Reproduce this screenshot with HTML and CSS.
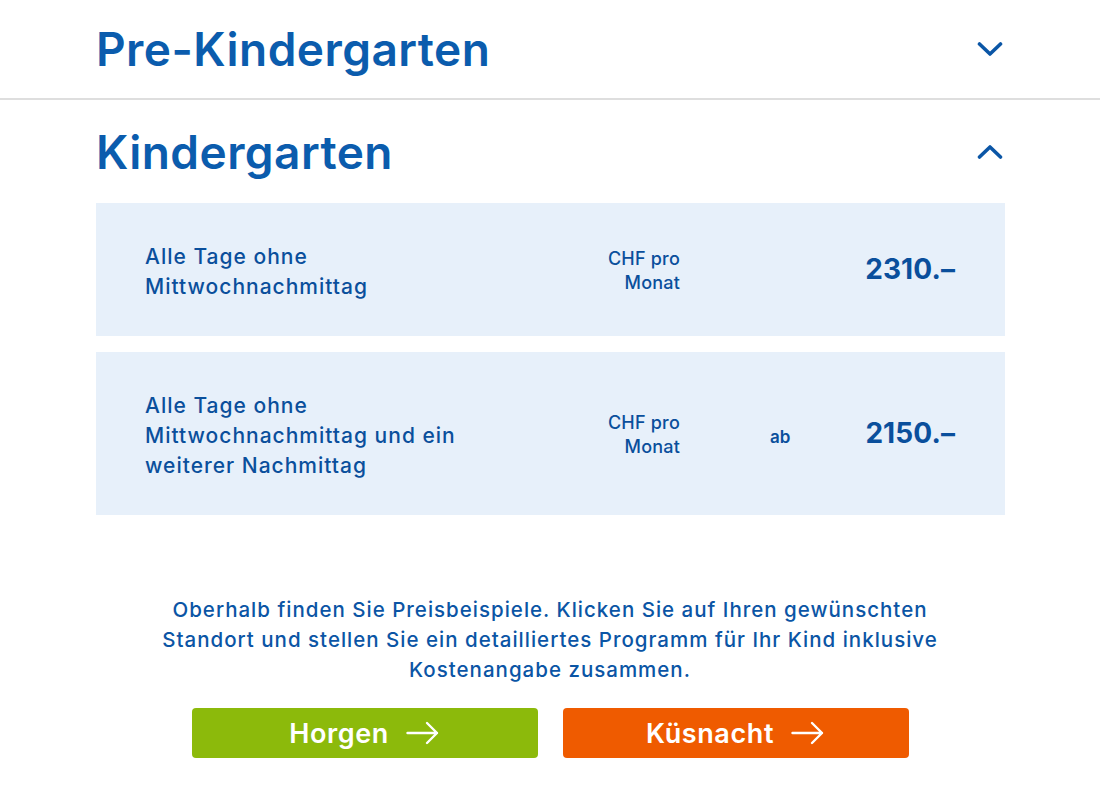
FILE: index.html
```html
<!DOCTYPE html>
<html lang="de">
<head>
<meta charset="utf-8">
<title>Preise</title>
<link rel="stylesheet" href="styles.css">
</head>
<body>
<section class="accordion">
  <div class="acc-item">
    <div class="acc-head">
      <h2 class="acc-title">Pre-Kindergarten</h2>
      <svg class="chevron" viewBox="0 0 26 16" width="26" height="16" aria-hidden="true"><path d="M2.5 3 L13 13 L23.5 3" fill="none" stroke="currentColor" stroke-width="3.6" stroke-linecap="round" stroke-linejoin="round"/></svg>
    </div>
  </div>
  <div class="acc-item open">
    <div class="acc-head">
      <h2 class="acc-title">Kindergarten</h2>
      <svg class="chevron" viewBox="0 0 26 16" width="26" height="16" aria-hidden="true"><path d="M2.5 13 L13 3 L23.5 13" fill="none" stroke="currentColor" stroke-width="3.6" stroke-linecap="round" stroke-linejoin="round"/></svg>
    </div>
    <div class="acc-body">
      <div class="price-row">
        <div class="desc">Alle Tage ohne<br>Mittwochnachmittag</div>
        <div class="unit">CHF pro<br>Monat</div>
        <div class="from"></div>
        <div class="amount">2310.–</div>
      </div>
      <div class="price-row">
        <div class="desc">Alle Tage ohne<br>Mittwochnachmittag und ein<br>weiterer Nachmittag</div>
        <div class="unit">CHF pro<br>Monat</div>
        <div class="from">ab</div>
        <div class="amount">2150.–</div>
      </div>
    </div>
  </div>
</section>
<section class="cta">
  <p class="cta-text">Oberhalb finden Sie Preisbeispiele. Klicken Sie auf Ihren gewünschten Standort und stellen Sie ein detailliertes Programm für Ihr Kind inklusive Kostenangabe zusammen.</p>
  <div class="cta-buttons">
    <a class="btn btn-green" href="#">Horgen <svg class="arrow" viewBox="0 0 34 24" width="34" height="24" aria-hidden="true"><path d="M1.5 12 H31 M21 2 L31 12 L21 22" fill="none" stroke="currentColor" stroke-width="2.4" stroke-linecap="round" stroke-linejoin="round"/></svg></a>
    <a class="btn btn-orange" href="#">Küsnacht <svg class="arrow" viewBox="0 0 34 24" width="34" height="24" aria-hidden="true"><path d="M1.5 12 H31 M21 2 L31 12 L21 22" fill="none" stroke="currentColor" stroke-width="2.4" stroke-linecap="round" stroke-linejoin="round"/></svg></a>
  </div>
</section>
</body>
</html>
```
FILE: styles.css
```css
* { box-sizing: border-box; }

html, body {
  margin: 0;
  padding: 0;
  background: #ffffff;
}

body {
  font-family: "Inter", "Noto Sans", sans-serif;
  color: #0b55a3;
}

.acc-item + .acc-item {
  border-top: 2px solid #dedede;
}

.acc-head {
  display: flex;
  align-items: center;
  justify-content: space-between;
  height: 98px;
  padding: 0 96px;
}

.open .acc-head {
  height: 103px;
}

.acc-title {
  margin: 0;
  font-size: 46px;
  font-weight: 600;
  color: #0b5cad;
  letter-spacing: 0.45px;
}

.chevron {
  color: #0b56a6;
  margin-right: 1px;
}

.acc-body {
  display: flex;
  flex-direction: column;
  gap: 16px;
  padding: 0 95px 0 96px;
}

.price-row {
  display: grid;
  grid-template-columns: 1fr 140px 150px 125px;
  align-items: center;
  background: #e7f0fa;
  padding: 39px 50px 34px 49px;
  color: #0a4f9c;
}

.desc {
  font-size: 21px;
  font-weight: 500;
  line-height: 30px;
  letter-spacing: 1px;
}

.unit {
  text-align: right;
  font-size: 18px;
  font-weight: 500;
  line-height: 24px;
  letter-spacing: 0.2px;
  margin-top: -3px;
}

.from {
  padding-left: 90px;
  font-size: 17px;
  font-weight: 600;
  padding-top: 2px;
}

.amount {
  text-align: right;
  font-size: 28px;
  font-weight: 700;
  letter-spacing: 0.1px;
  margin-top: -6px;
}

.cta {
  padding-top: 80px;
  display: flex;
  flex-direction: column;
  align-items: center;
}

.cta-text {
  margin: 0;
  max-width: 800px;
  text-align: center;
  font-size: 20.5px;
  font-weight: 500;
  line-height: 30px;
  letter-spacing: 1px;
  color: #0b55a5;
}

.cta-buttons {
  display: flex;
  gap: 25px;
  margin-top: 23px;
}

.btn {
  display: flex;
  align-items: center;
  justify-content: center;
  gap: 17px;
  width: 346px;
  height: 50px;
  border-radius: 4px;
  color: #ffffff;
  text-decoration: none;
  font-size: 27px;
  font-weight: 600;
  letter-spacing: 0.6px;
}

.btn-green { background: #8cba0b; }
.btn-orange { background: #ef5b00; }

.arrow { display: block; }
```
